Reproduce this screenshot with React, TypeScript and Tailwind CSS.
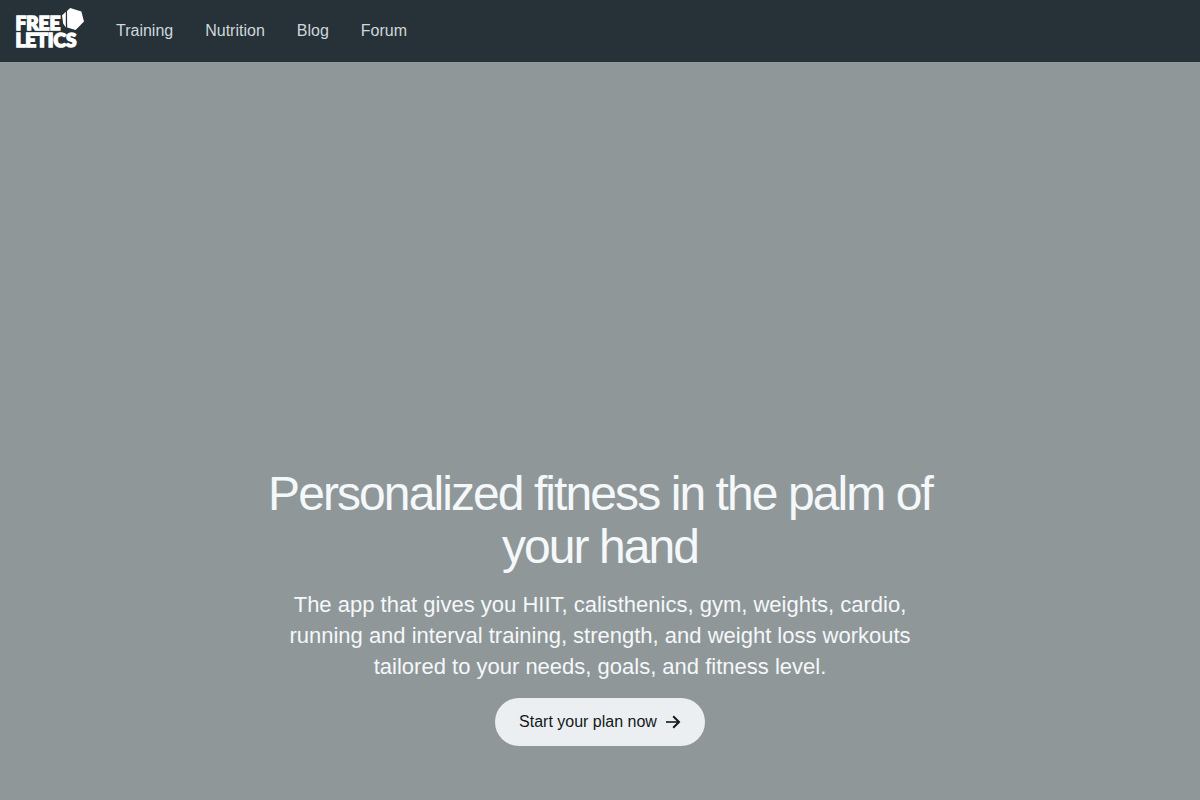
const links = ["Training", "Nutrition", "Blog", "Forum"];

function Logo() {
  return (
    <svg width="68" height="40" viewBox="0 0 68 40" overflow="visible" role="img" aria-label="Freeletics" fill="#fff">
      <g fontFamily="Lato, sans-serif" fontWeight="900" fontSize="19" stroke="#fff" strokeWidth="1.5">
        <text x="-0.6" y="21.5">FREE</text>
        <text x="-0.6" y="39">LETICS</text>
      </g>
      <path d="M49.8 3.8 46 7.4 47.2 15.6 49.8 19.4Z" />
      <path d="M51 3 54.2 0 65.4 3.4 68 13.4 59.6 22 51.2 19.6Z" />
    </svg>
  );
}

function ArrowRight() {
  return (
    <svg width="16" height="16" viewBox="0 0 16 16" fill="none" stroke="currentColor" aria-hidden="true">
      <path d="M1 8H14" strokeWidth="1.6" />
      <path d="M8.2 2.2 14 8 8.2 13.8" strokeWidth="2" />
    </svg>
  );
}

export default function App() {
  return (
    <div className="flex min-h-screen flex-col bg-[#8f9799] font-['Liberation_Sans',Arial,sans-serif]">
      <header className="flex h-[62px] items-center gap-8 bg-[#263238] px-4">
        <a href="#home" className="-mt-1.5">
          <Logo />
        </a>
        <nav className="flex gap-8 text-base text-[#cfd8dc]">
          {links.map((label) => (
            <a key={label} href={`#${label.toLowerCase()}`}>
              {label}
            </a>
          ))}
        </nav>
      </header>
      <main className="flex flex-1 flex-col items-center justify-end px-4 pb-[54px]">
        <section className="flex max-w-2xl flex-col items-center gap-4 text-center text-[#f5f8fa]">
          <h1 className="text-5xl leading-[53px] tracking-[-0.04em]">
            Personalized fitness in the palm of your hand
          </h1>
          <p className="text-[22px] leading-[31px]">
            The app that gives you HIIT, calisthenics, gym, weights, cardio, running and interval
            training, strength, and weight loss workouts tailored to your needs, goals, and fitness
            level.
          </p>
          <a
            href="#start"
            className="flex h-12 items-center gap-2 rounded-full bg-[#eceff1] px-6 text-base text-[#12191c]"
          >
            Start your plan now
            <ArrowRight />
          </a>
        </section>
      </main>
    </div>
  );
}
